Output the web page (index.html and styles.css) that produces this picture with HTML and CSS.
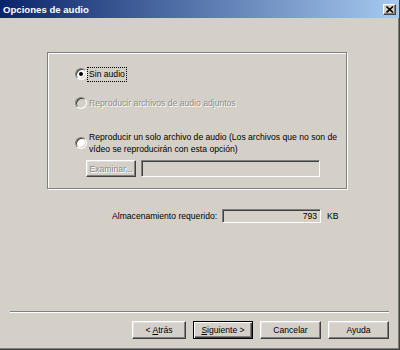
FILE: index.html
```html
<!DOCTYPE html>
<html lang="es">
<head>
  <meta charset="UTF-8" />
  <title>Opciones de audio</title>
  <link rel="stylesheet" href="styles.css">
</head>
<body>

<div class="window">
  <div class="titlebar">
    <span class="title">Opciones de audio</span>
    <span class="close">
      <svg width="8" height="7" viewBox="0 0 8 7"><path d="M0.5 0.5 L7 6.5 M7 0.5 L0.5 6.5" stroke="#000" stroke-width="1.6"/></svg>
    </span>
  </div>

  <div class="content">
    <div class="group">
      <div class="option row1">
        <span class="radio checked"></span>
        <span class="focus">Sin audio</span>
      </div>
      <div class="option row2 disabled">
        <span class="radio off"></span>
        <span class="label">Reproducir archivos de audio adjuntos</span>
      </div>
      <div class="option row3">
        <span class="radio"></span>
        <span class="label">Reproducir un solo archivo de audio (Los archivos que no son de<br>vídeo se reproducirán con esta opción)</span>
      </div>
      <div class="browse">
        <span class="btn btn-off">Examinar...</span>
        <span class="field field-wide"></span>
      </div>
    </div>

    <div class="storage">
      <span class="storage-label">Almacenamiento requerido:</span>
      <span class="field field-value">793</span>
      <span class="unit">KB</span>
    </div>

    <div class="separator"></div>

    <div class="buttons">
      <span class="btn btn-back"><span class="inner">&lt; <u>A</u>trás</span></span>
      <span class="btn btn-default"><span class="inner"><u>S</u>iguiente &gt;</span></span>
      <span class="btn">Cancelar</span>
      <span class="btn">Ayuda</span>
    </div>
  </div>
</div>

</body>
</html>
```

FILE: styles.css
```css
body {
  margin: 0;
  font-family: "Liberation Sans", Arial, sans-serif;
  font-size: 8.6px;
  color: #000;
  background: #d4d0c8;
}
.window {
  width: 400px;
  height: 350px;
  box-sizing: border-box;
  background: #d4d0c8;
  border-right: 1px solid #404040;
  border-bottom: 1px solid #404040;
  box-shadow: inset -1px -1px 0 #808080;
}
.titlebar {
  height: 18px;
  display: flex;
  align-items: center;
  justify-content: space-between;
  background: linear-gradient(to right, #0a246a, #a6caf0);
}
.title {
  color: #fff;
  font-weight: bold;
  font-size: 9.6px;
  padding-left: 3px;
}
.close {
  width: 13px;
  height: 11px;
  margin-right: 3px;
  box-sizing: border-box;
  display: flex;
  align-items: center;
  justify-content: center;
  background: #d4d0c8;
  border: 1px solid;
  border-color: #fff #404040 #404040 #fff;
  box-shadow: inset -1px -1px 0 #808080;
}
.group {
  margin: 34px 0 0 47px;
  width: 300px;
  height: 137px;
  box-sizing: border-box;
  padding: 14px 0 0 27px;
  border: 1px solid #808080;
  box-shadow: inset 1px 1px 0 #fff, 1px 1px 0 #fff;
}
.option {
  display: flex;
  align-items: center;
  height: 14px;
}
.row2 { margin-top: 15px; }
.row3 {
  margin-top: 21px;
  height: 24px;
  line-height: 12px;
}
.radio {
  width: 12px;
  height: 12px;
  flex: none;
  box-sizing: border-box;
  border-radius: 50%;
  border: 1px solid;
  border-color: #808080 #fff #fff #808080;
  box-shadow: inset 1px 1px 0 #404040, inset -1px -1px 0 #d4d0c8;
  background: #fff;
  margin-right: 1px;
  position: relative;
}
.radio.checked::after {
  content: "";
  position: absolute;
  left: 3px;
  top: 3px;
  width: 4px;
  height: 4px;
  border-radius: 50%;
  background: #000;
}
.radio.off { background: #d4d0c8; }
.focus {
  outline: 1px dotted #000;
  padding: 1px 1px;
  line-height: 11px;
}
.label { padding-left: 1px; }
.disabled .label, .btn-off {
  color: #8c8c8c;
  text-shadow: 1px 1px 0 #fff;
}
.browse {
  display: flex;
  margin: 5px 0 0 11px;
  height: 17px;
}
.field {
  box-sizing: border-box;
  border: 1px solid;
  border-color: #808080 #fff #fff #808080;
  box-shadow: inset 1px 1px 0 #404040, inset -1px -1px 0 #d4d0c8;
  background: #d4d0c8;
}
.field-wide {
  width: 179px;
  margin-left: 5px;
}
.storage {
  display: flex;
  align-items: center;
  margin-top: 20px;
  height: 14px;
}
.storage-label {
  margin-left: 112px;
  width: 110px;
}
.field-value {
  width: 99px;
  height: 14px;
  text-align: right;
  padding-right: 3px;
  line-height: 12px;
}
.unit { margin-left: 6px; }
.separator {
  margin: 88px 10px 0;
  border-top: 1px solid #808080;
  border-bottom: 1px solid #fff;
  height: 0;
}
.buttons {
  display: flex;
  justify-content: flex-end;
  gap: 7px;
  margin-top: 8px;
  padding-right: 10px;
}
.btn {
  width: 61px;
  height: 18px;
  box-sizing: border-box;
  display: flex;
  align-items: center;
  justify-content: center;
  background: #d4d0c8;
  border: 1px solid;
  border-color: #fff #404040 #404040 #fff;
  box-shadow: inset -1px -1px 0 #808080, inset 1px 1px 0 #dfdfdf;
}
.browse .btn { width: 50px; height: 17px; }
.btn-back { width: 54px; }
.btn-default {
  width: 60px;
  border: 1px solid #000;
  box-shadow: inset 1px 1px 0 #fff, inset -1px -1px 0 #404040, inset -2px -2px 0 #808080;
}
```
